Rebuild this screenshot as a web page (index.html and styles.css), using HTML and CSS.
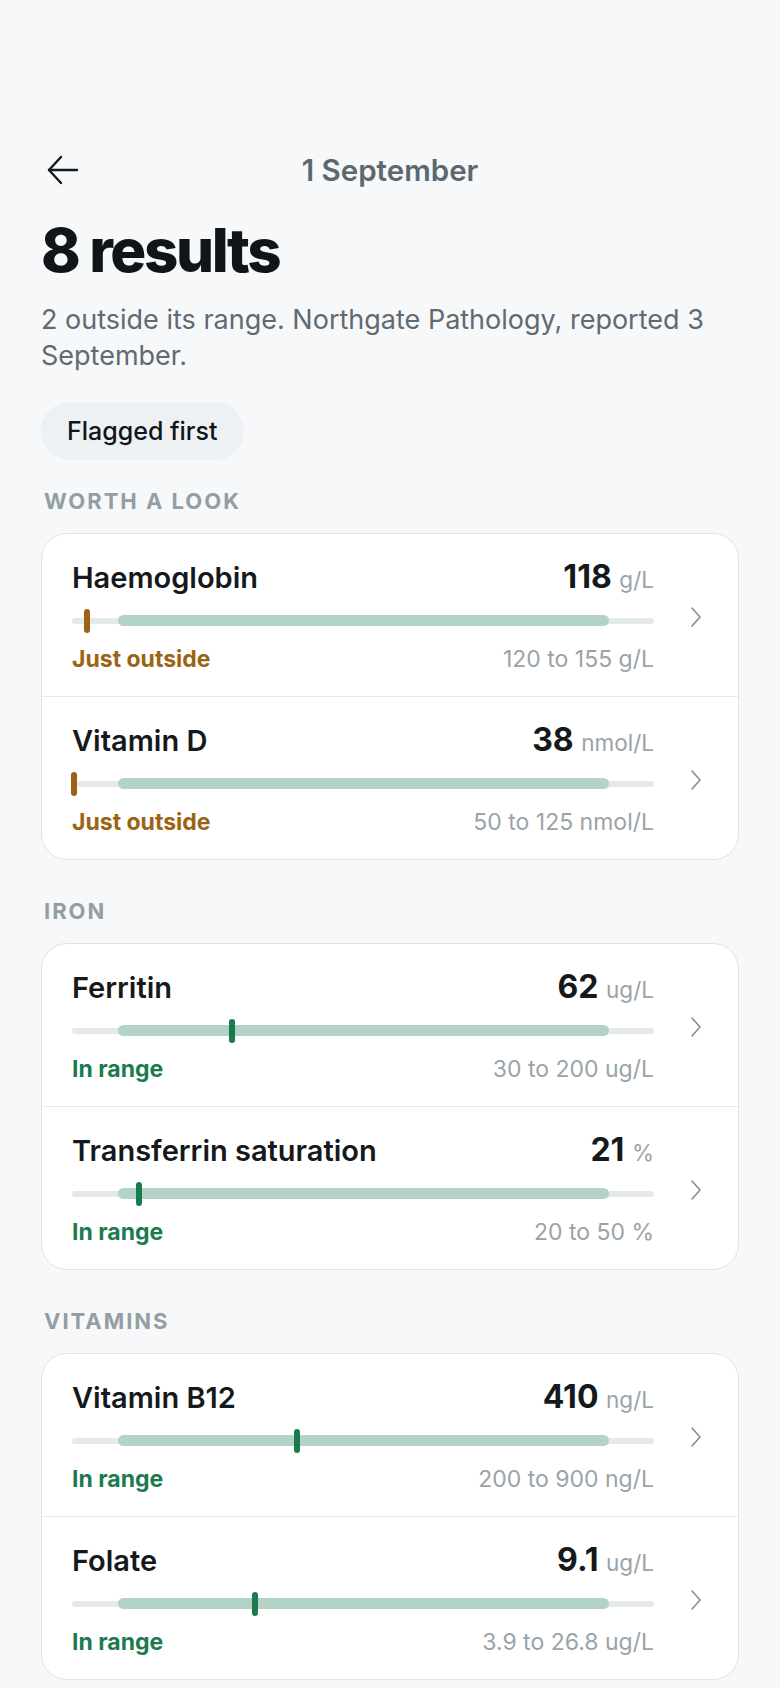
FILE: index.html
```html
<!DOCTYPE html>
<html lang="en">
<head>
    <meta charset="UTF-8">
    <meta name="viewport" content="width=device-width, initial-scale=1.0">
    <title>Results - 1 September</title>
    <link rel="stylesheet" href="styles.css">
</head>
<body>
    <div class="page">
        <header class="top-bar">
            <button class="back" aria-label="Back">
                <svg width="36" height="36" viewBox="0 0 36 36" fill="none" stroke="#15191c" stroke-width="2.4" stroke-linecap="round" stroke-linejoin="round">
                    <path d="M32 18H4"/>
                    <path d="M16 5L4 18l12 13"/>
                </svg>
            </button>
            <div class="top-title">1 September</div>
            <div class="spacer"></div>
        </header>

        <h1>8 results</h1>
        <p class="summary">2 outside its range. Northgate Pathology, reported 3 September.</p>

        <button class="pill">Flagged first</button>

        <h2 class="section-label">Worth a look</h2>
        <div class="card">
            <div class="row">
                <div class="row-main">
                    <div class="row-top">
                        <span class="name">Haemoglobin</span>
                        <span class="value">118 <span class="unit">g/L</span></span>
                    </div>
                    <div class="bar">
                        <div class="track"></div>
                        <div class="band"></div>
                        <div class="marker outside" style="left: 2.6%"></div>
                    </div>
                    <div class="row-bottom">
                        <span class="status outside">Just outside</span>
                        <span class="range">120 to 155 g/L</span>
                    </div>
                </div>
                <svg class="chevron" width="14" height="24" viewBox="0 0 14 24" fill="none" stroke="#858e94" stroke-width="1.6" stroke-linecap="round" stroke-linejoin="round"><path d="M3 3l8 9-8 9"/></svg>
            </div>
            <div class="row">
                <div class="row-main">
                    <div class="row-top">
                        <span class="name">Vitamin D</span>
                        <span class="value">38 <span class="unit">nmol/L</span></span>
                    </div>
                    <div class="bar">
                        <div class="track"></div>
                        <div class="band"></div>
                        <div class="marker outside" style="left: 0.4%"></div>
                    </div>
                    <div class="row-bottom">
                        <span class="status outside">Just outside</span>
                        <span class="range">50 to 125 nmol/L</span>
                    </div>
                </div>
                <svg class="chevron" width="14" height="24" viewBox="0 0 14 24" fill="none" stroke="#858e94" stroke-width="1.6" stroke-linecap="round" stroke-linejoin="round"><path d="M3 3l8 9-8 9"/></svg>
            </div>
        </div>

        <h2 class="section-label">Iron</h2>
        <div class="card">
            <div class="row">
                <div class="row-main">
                    <div class="row-top">
                        <span class="name">Ferritin</span>
                        <span class="value">62 <span class="unit">ug/L</span></span>
                    </div>
                    <div class="bar">
                        <div class="track"></div>
                        <div class="band"></div>
                        <div class="marker" style="left: 27.5%"></div>
                    </div>
                    <div class="row-bottom">
                        <span class="status">In range</span>
                        <span class="range">30 to 200 ug/L</span>
                    </div>
                </div>
                <svg class="chevron" width="14" height="24" viewBox="0 0 14 24" fill="none" stroke="#858e94" stroke-width="1.6" stroke-linecap="round" stroke-linejoin="round"><path d="M3 3l8 9-8 9"/></svg>
            </div>
            <div class="row">
                <div class="row-main">
                    <div class="row-top">
                        <span class="name">Transferrin saturation</span>
                        <span class="value">21 <span class="unit">%</span></span>
                    </div>
                    <div class="bar">
                        <div class="track"></div>
                        <div class="band"></div>
                        <div class="marker" style="left: 11.5%"></div>
                    </div>
                    <div class="row-bottom">
                        <span class="status">In range</span>
                        <span class="range">20 to 50 %</span>
                    </div>
                </div>
                <svg class="chevron" width="14" height="24" viewBox="0 0 14 24" fill="none" stroke="#858e94" stroke-width="1.6" stroke-linecap="round" stroke-linejoin="round"><path d="M3 3l8 9-8 9"/></svg>
            </div>
        </div>

        <h2 class="section-label">Vitamins</h2>
        <div class="card">
            <div class="row">
                <div class="row-main">
                    <div class="row-top">
                        <span class="name">Vitamin B12</span>
                        <span class="value">410 <span class="unit">ng/L</span></span>
                    </div>
                    <div class="bar">
                        <div class="track"></div>
                        <div class="band"></div>
                        <div class="marker" style="left: 38.6%"></div>
                    </div>
                    <div class="row-bottom">
                        <span class="status">In range</span>
                        <span class="range">200 to 900 ng/L</span>
                    </div>
                </div>
                <svg class="chevron" width="14" height="24" viewBox="0 0 14 24" fill="none" stroke="#858e94" stroke-width="1.6" stroke-linecap="round" stroke-linejoin="round"><path d="M3 3l8 9-8 9"/></svg>
            </div>
            <div class="row">
                <div class="row-main">
                    <div class="row-top">
                        <span class="name">Folate</span>
                        <span class="value">9.1 <span class="unit">ug/L</span></span>
                    </div>
                    <div class="bar">
                        <div class="track"></div>
                        <div class="band"></div>
                        <div class="marker" style="left: 31.5%"></div>
                    </div>
                    <div class="row-bottom">
                        <span class="status">In range</span>
                        <span class="range">3.9 to 26.8 ug/L</span>
                    </div>
                </div>
                <svg class="chevron" width="14" height="24" viewBox="0 0 14 24" fill="none" stroke="#858e94" stroke-width="1.6" stroke-linecap="round" stroke-linejoin="round"><path d="M3 3l8 9-8 9"/></svg>
            </div>
        </div>
    </div>
</body>
</html>
```

FILE: styles.css
```css
body {
    margin: 0;
    padding: 0;
    background: #f6f8fa;
    color: #15191c;
    font-family: Inter, "Noto Sans", sans-serif;
}

.page {
    padding: 152px 41px 40px;
}

.top-bar {
    display: grid;
    grid-template-columns: 60px 1fr 60px;
    align-items: center;
    height: 36px;
}

.back {
    display: flex;
    padding: 0;
    margin-left: 4px;
    border: none;
    background: none;
    cursor: pointer;
}

.top-title {
    text-align: center;
    font-size: 29.5px;
    font-weight: 600;
    color: #5c6870;
}

h1 {
    margin: 29px 0 0;
    font-size: 60px;
    line-height: 66px;
    font-weight: 800;
    letter-spacing: -0.04em;
    color: #111517;
}

.summary {
    margin: 19px 0 0;
    font-size: 27px;
    line-height: 36px;
    color: #5f6a72;
}

.pill {
    margin-top: 28px;
    height: 58px;
    padding: 0 26px;
    border: none;
    border-radius: 29px;
    background: #eef1f3;
    font-family: inherit;
    font-size: 25px;
    font-weight: 500;
    color: #111517;
    cursor: pointer;
}

.section-label {
    margin: 39px 0 20px 3px;
    font-size: 22px;
    line-height: 24px;
    font-weight: 700;
    letter-spacing: 0.09em;
    text-transform: uppercase;
    color: #939ea4;
}

.pill + .section-label {
    margin-top: 29px;
}

.card {
    background: #fff;
    border: 1px solid #dfe4e7;
    border-radius: 26px;
    overflow: hidden;
}

.row {
    display: flex;
    align-items: center;
    gap: 35px;
    padding: 26px 35px 23px 30px;
}

.row + .row {
    border-top: 1px solid #e5e9ec;
}

.row-main {
    flex: 1;
}

.row-top, .row-bottom {
    display: flex;
    justify-content: space-between;
    align-items: baseline;
}

.name {
    font-size: 29px;
    line-height: 34px;
    font-weight: 600;
}

.value {
    font-size: 32px;
    line-height: 34px;
    font-weight: 700;
}

.unit {
    font-size: 22.5px;
    font-weight: 400;
    color: #9aa3a9;
}

.bar {
    position: relative;
    height: 24px;
    margin: 12px 0 13px;
}

.track {
    position: absolute;
    left: 0;
    right: 0;
    top: 9px;
    height: 6px;
    border-radius: 3px;
    background: #e4e9eb;
}

.band {
    position: absolute;
    left: 7.9%;
    right: 7.8%;
    top: 6px;
    height: 11px;
    border-radius: 6px;
    background: #b4d3c7;
}

.marker {
    position: absolute;
    top: 0;
    width: 6px;
    height: 24px;
    margin-left: -3px;
    border-radius: 3px;
    background: #1c7a4f;
}

.marker.outside {
    background: #9b6414;
}

.status {
    font-size: 23px;
    line-height: 27px;
    font-weight: 700;
    color: #1c7a4f;
}

.status.outside {
    color: #9b6414;
}

.range {
    font-size: 23px;
    line-height: 27px;
    color: #9aa3a9;
}

.chevron {
    flex-shrink: 0;
}
```
